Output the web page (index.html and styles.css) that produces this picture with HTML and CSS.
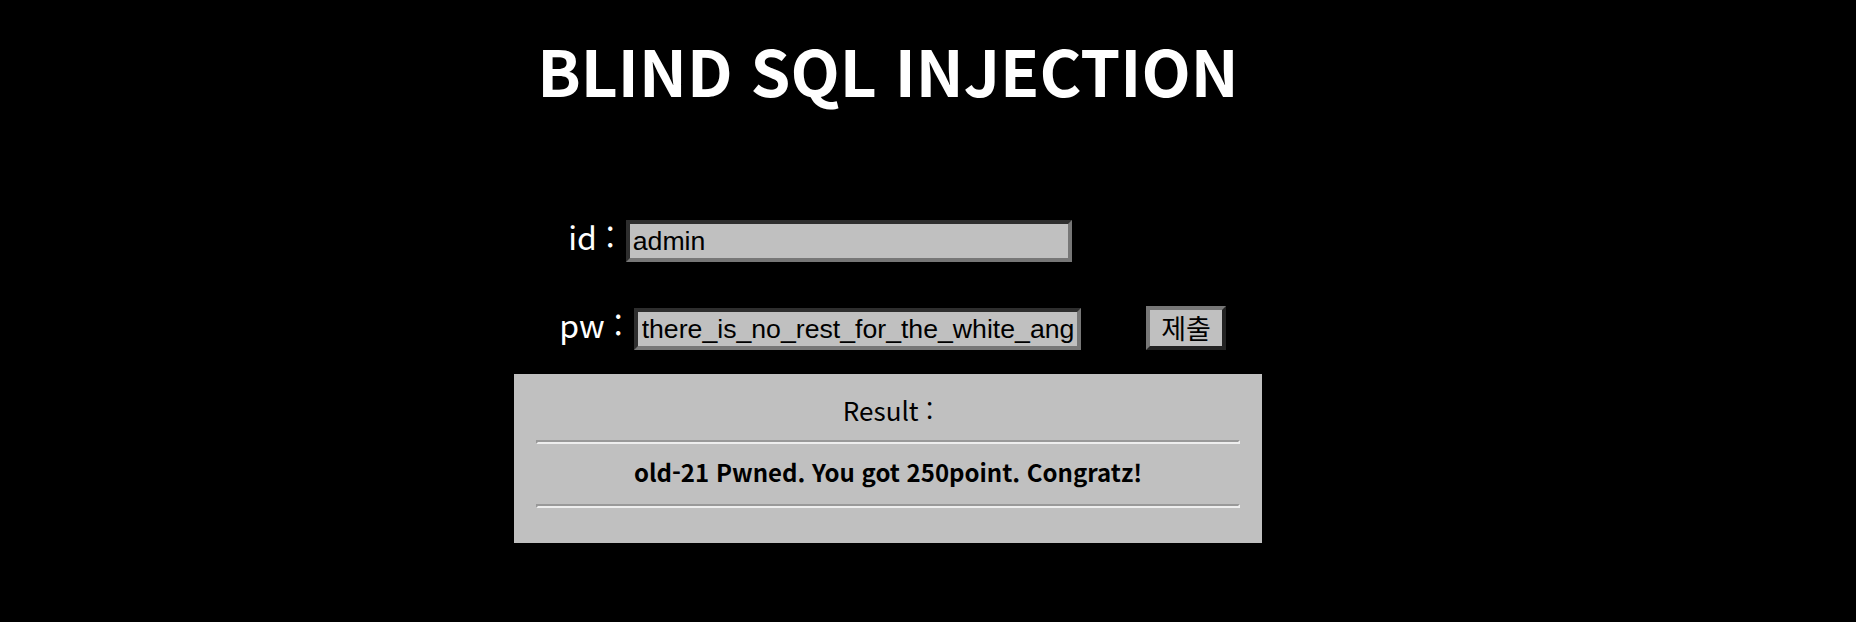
FILE: index.html
```html
<!DOCTYPE html>
<html lang="ko">
<head>
<meta charset="utf-8">
<title>Challenge 21</title>
<link rel="stylesheet" href="styles.css">
</head>
<body>
<div class="page">
  <h1 class="title">BLIND SQL INJECTION</h1>
  <form class="login">
    <div class="field"><label class="field-label">id :</label><input class="text-input" type="text" value="admin"></div>
    <div class="submit-cell"></div>
    <div class="field"><label class="field-label">pw :</label><input class="text-input text-input-pw" type="text" value="there_is_no_rest_for_the_white_angel"></div>
    <div class="submit-cell"><button class="submit" type="button">제출</button></div>
  </form>
  <div class="result">
    <div class="result-label">Result :</div>
    <hr class="rule">
    <div class="result-msg">old-21 Pwned. You got 250point. Congratz!</div>
    <hr class="rule">
  </div>
</div>
</body>
</html>
```
FILE: styles.css
```css
html, body {
  margin: 0;
  padding: 0;
  background: #000;
}

body {
  font-family: "Noto Sans CJK KR", "Noto Sans", sans-serif;
  color: #fff;
}

.page {
  width: 1776px;
  padding-top: 37px;
  display: flex;
  flex-direction: column;
  align-items: center;
}

.title {
  margin: 0;
  font-size: 64px;
  line-height: 64px;
  font-weight: 700;
  color: #fff;
}

.login {
  margin-top: 119px;
  display: grid;
  grid-template-columns: 580px 136px;
  row-gap: 44px;
  align-items: end;
}

.field {
  display: flex;
  justify-content: center;
  align-items: center;
  gap: 11px;
}

.field-label {
  font-size: 32px;
  line-height: 32px;
  color: #fff;
  position: relative;
  top: -5px;
}

.text-input {
  box-sizing: border-box;
  width: 446px;
  height: 42px;
  margin: 0;
  padding: 2px 3px;
  background: #c0c0c0;
  border: 4px solid;
  border-color: #2e2e2e #777 #777 #2e2e2e;
  font-family: "Liberation Sans", Arial, sans-serif;
  font-size: 26.67px;
  color: #000;
  outline: none;
}

.text-input-pw {
  width: 447px;
  padding-left: 4px;
}

.submit-cell {
  padding-left: 36px;
}

.submit {
  box-sizing: border-box;
  width: 80px;
  height: 44px;
  margin: 0;
  padding: 0;
  background: #c0c0c0;
  border: 4px solid;
  border-color: #777 #222 #222 #777;
  font-family: "Noto Sans CJK KR", sans-serif;
  font-size: 27px;
  line-height: 32px;
  color: #000;
}

.result {
  box-sizing: border-box;
  margin-top: 24px;
  width: 748px;
  height: 169px;
  padding: 16px 22px 0;
  background: #c0c0c0;
  color: #000;
  text-align: center;
}

.result-label {
  font-size: 26px;
  line-height: 40px;
}

.rule {
  margin: 10px 0 0;
  height: 0;
  border: 2px solid;
  border-color: #999 #eee #eee #999;
}

.result-msg {
  margin: 8px 0 12px;
  font-size: 24px;
  line-height: 40px;
  font-weight: 700;
}
```
